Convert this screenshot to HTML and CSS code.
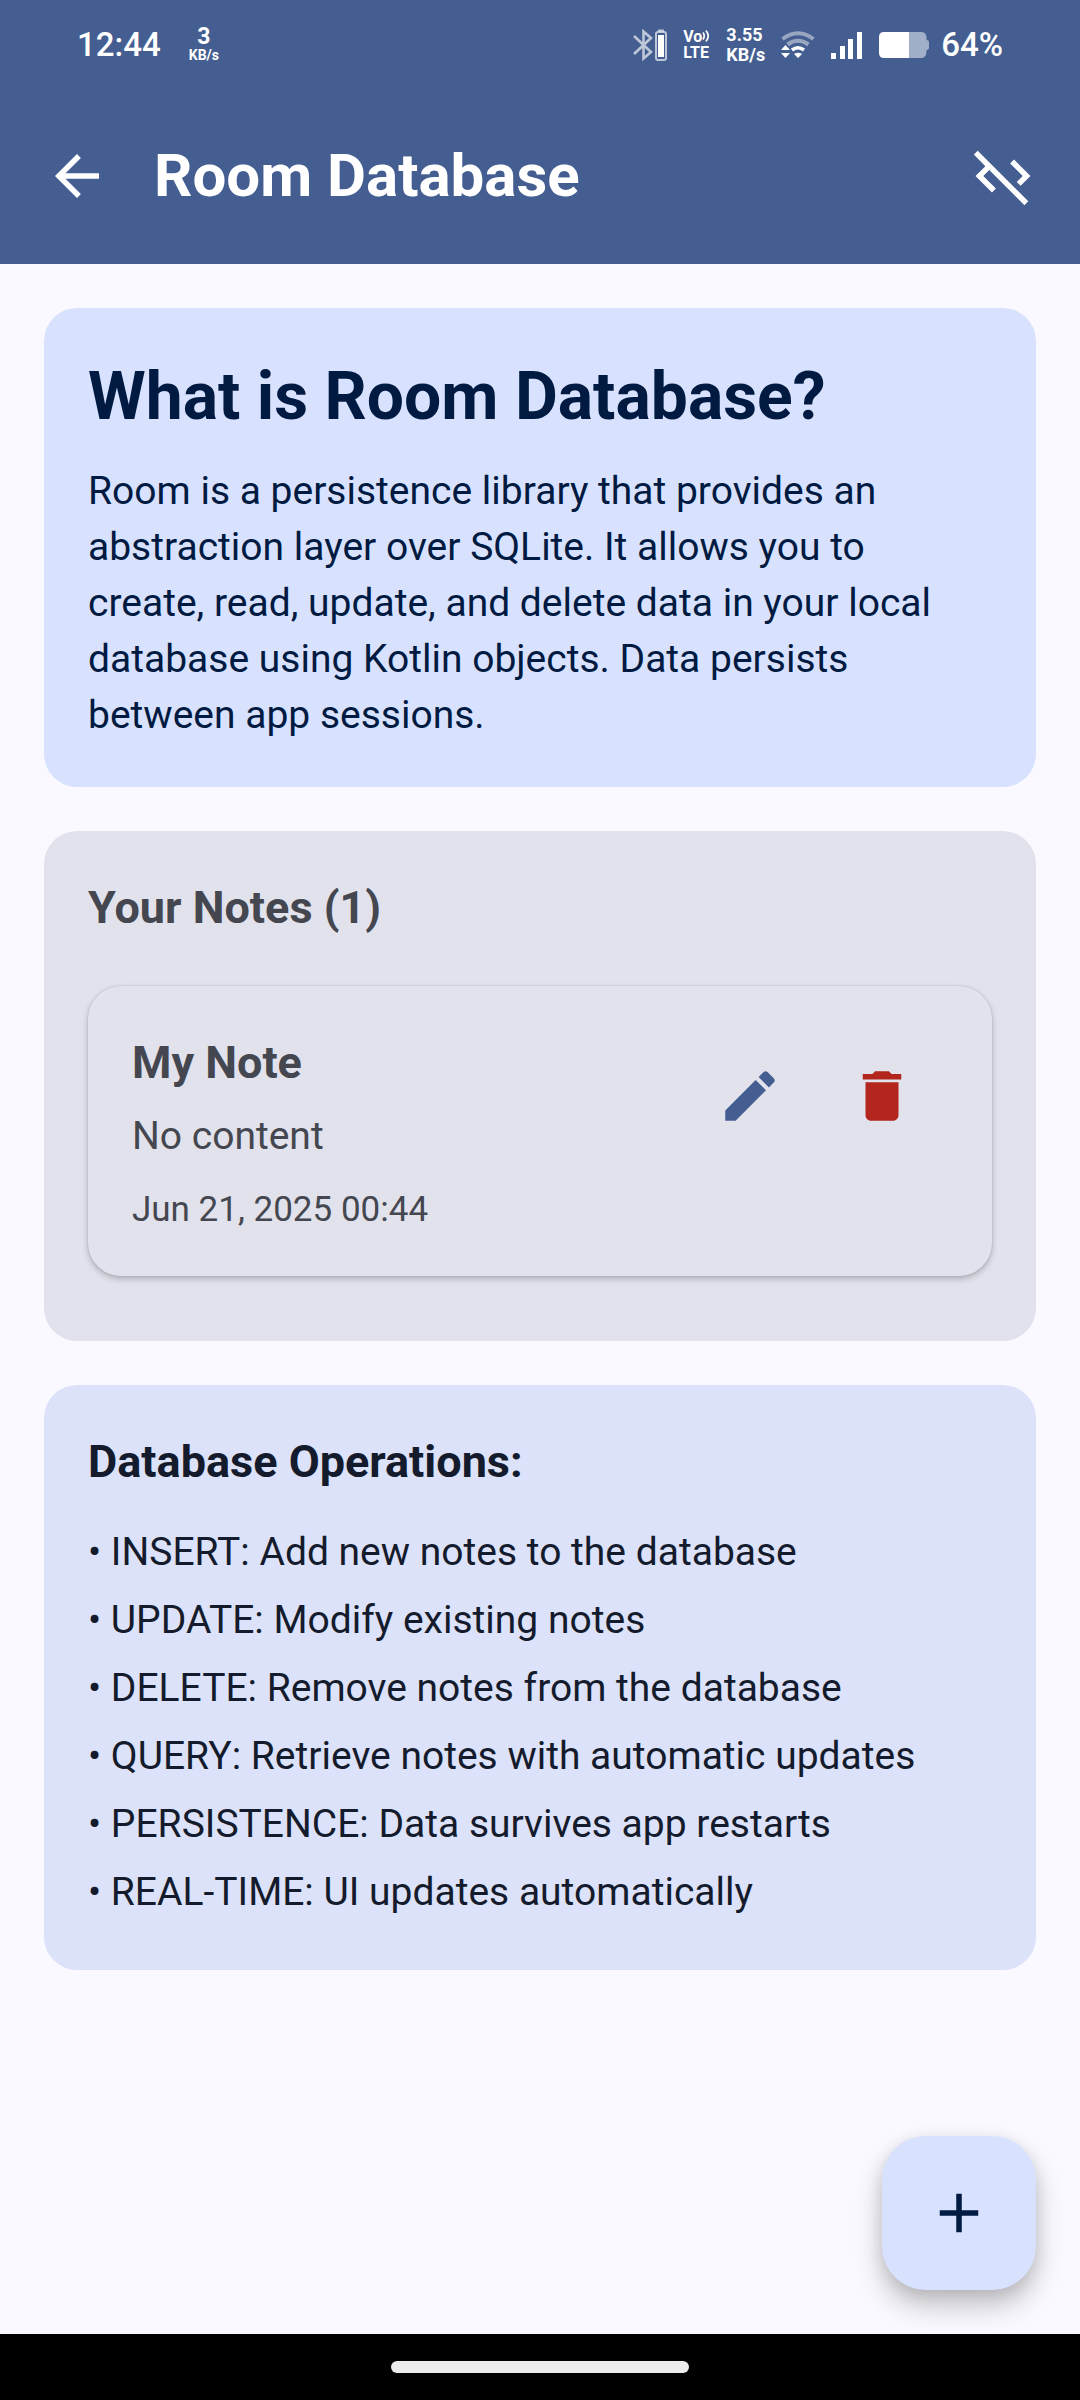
FILE: index.html
```html
<!DOCTYPE html>
<html lang="en">
<head>
  <meta charset="utf-8">
  <meta name="viewport" content="width=device-width, initial-scale=1">
  <title>Room Database</title>
  <link rel="stylesheet" href="styles.css">
</head>
<body>
  <div class="screen">
    <header class="header">
      <div class="status">
        <div class="status-group">
          <span class="status-time">12:44</span>
          <span class="net-speed"><b>3</b><small>KB/s</small></span>
        </div>
        <div class="status-group status-right">
          <svg class="status-icon" width="34" height="32" viewBox="0 0 34 32" aria-label="Bluetooth">
            <g fill="none" stroke="#fff" stroke-opacity=".65">
              <path stroke-width="2.6" d="M1 7 18 23 10.5 29.500V2.500L18 9 1 25"/>
              <rect x="23" y="3" width="10" height="28" rx="2" stroke-width="2"/>
              <path stroke-width="2" d="M25 1.500h6"/>
            </g>
            <path fill="#fff" d="M25 6h6v22h-6z"/>
          </svg>
          <span class="volte"><span class="volte-top">Vo<svg width="8" height="14" viewBox="0 0 8 14" aria-hidden="true"><path fill="none" stroke="#fff" stroke-width="1.700" d="M1 3.500q2.500 3.500 0 7M4 1.500q4.500 5.500 0 11"/></svg></span><span>LTE</span></span>
          <span class="rate"><span>3.55</span><span>KB/s</span></span>
          <svg class="status-icon" width="34" height="28" viewBox="0 0 34 28" aria-label="Wi-Fi">
            <g fill="none" stroke="#fff" stroke-width="4">
              <path stroke-opacity=".45" d="M1.500 8q15.500-11.500 31 0M6.500 13.500q10.500-7.500 21 0"/>
              <path d="M11 19q6-4.500 12 0" stroke-width="3.600"/>
            </g>
            <path fill="#fff" d="M17 27l-4-4q4-2.600 8 0zM0 19l4.500-5 4.500 5zM0 22h9l-4.500 5z"/>
          </svg>
          <svg class="status-icon" width="32" height="28" viewBox="0 0 32 28" aria-label="Mobile signal">
            <path fill="#fff" d="M0 22h5v6H0zM9 15h5v13H9zM17 8h5v20h-5zM26 1h5v27h-5z"/>
          </svg>
          <span class="power">
            <svg class="status-icon" width="50" height="26" viewBox="0 0 50 26" aria-label="Battery">
              <path fill="#fff" fill-opacity=".5" d="M30 0h12q5 0 5.500 5v3q2.500 0 2.500 2v6q0 2-2.500 2v2q-.5 6-5.500 6H30z"/>
              <path fill="#fff" d="M30 0v26H5q-5 0-5-5V5q0-5 5-5z"/>
            </svg>
            <span class="status-percent">64%</span>
          </span>
        </div>
      </div>
      <div class="app-bar">
        <button class="icon-button" type="button" aria-label="Back">
          <svg viewBox="0 0 24 24"><path d="M20 11H7.830l5.590-5.590L12 4l-8 8 8 8 1.410-1.410L7.830 13H20z"/></svg>
        </button>
        <h1 class="app-title">Room Database</h1>
        <button class="icon-button" type="button" aria-label="Hide code">
          <svg viewBox="0 0 24 24"><path d="M19.170 12l-4.580-4.590L16 6l6 6-3.590 3.590L17 14.170zM1.390 4.220l4.190 4.190L2 12l6 6 1.410-1.410L4.830 12 7 9.830l12.780 12.780 1.410-1.410L2.810 2.810z"/></svg>
        </button>
      </div>
    </header>

    <main class="content">
      <section class="card intro">
        <h2 class="headline">What is Room Database?</h2>
        <p class="body intro-text">Room is a persistence library that provides an abstraction layer over SQLite. It allows you to create, read, update, and delete data in your local database using Kotlin objects. Data persists between app sessions.</p>
      </section>

      <section class="card notes">
        <h2 class="title">Your Notes (1)</h2>
        <article class="note">
          <div class="note-text">
            <h3 class="title">My Note</h3>
            <p class="body">No content</p>
            <time class="date" datetime="2025-06-21T00:44">Jun 21, 2025 00:44</time>
          </div>
          <button class="icon-button edit" type="button" aria-label="Edit note">
            <svg viewBox="0 0 24 24"><path d="M3 17.250V21h3.750L17.810 9.940l-3.750-3.750zM20.710 7.040c.39-.39.39-1.020 0-1.410l-2.340-2.340c-.39-.39-1.020-.39-1.410 0l-1.830 1.830 3.750 3.750z"/></svg>
          </button>
          <button class="icon-button delete" type="button" aria-label="Delete note">
            <svg viewBox="0 0 24 24"><path d="M6 19c0 1.100.9 2 2 2h8c1.100 0 2-.9 2-2V7H6zM19 4h-3.500l-1-1h-5l-1 1H5v2h14z"/></svg>
          </button>
        </article>
      </section>

      <section class="card operations">
        <h2 class="title">Database Operations:</h2>
        <ul class="operation-list body">
          <li>• INSERT: Add new notes to the database</li>
          <li>• UPDATE: Modify existing notes</li>
          <li>• DELETE: Remove notes from the database</li>
          <li>• QUERY: Retrieve notes with automatic updates</li>
          <li>• PERSISTENCE: Data survives app restarts</li>
          <li>• REAL-TIME: UI updates automatically</li>
        </ul>
      </section>

      <button class="fab" type="button" aria-label="Add note">
        <svg viewBox="0 0 24 24"><path d="M19 13h-6v6h-2v-6H5v-2h6V5h2v6h6z"/></svg>
      </button>
    </main>

    <footer class="nav-bar"><span class="nav-handle"></span></footer>
  </div>
</body>
</html>
```
FILE: styles.css
```css
* {
  box-sizing: border-box;
}

body,
h1,
h2,
h3,
p,
ul {
  margin: 0;
  padding: 0;
}

body {
  background: #faf9ff;
  font-family: Roboto, "Noto Sans", sans-serif;
}

button {
  border: 0;
  padding: 0;
  background: none;
  font: inherit;
  cursor: pointer;
}

svg {
  display: block;
}

.screen {
  display: flex;
  flex-direction: column;
  min-height: 100vh;
}

/* Header */
.header {
  background: #445e91;
  color: #fff;
}

.status {
  display: flex;
  justify-content: space-between;
  align-items: center;
  height: 88px;
  padding: 2px 77px 0;
}

.status-group {
  display: flex;
  align-items: center;
  gap: 28px;
}

.status-right {
  gap: 16px;
}

.status-icon {
  flex: none;
}

.power {
  display: flex;
  align-items: center;
  gap: 12px;
}

.status-time,
.status-percent {
  font-size: 33px;
  font-weight: 500;
  line-height: 40px;
}

.net-speed {
  display: flex;
  flex-direction: column;
  align-items: center;
}

.net-speed b {
  font-size: 23px;
  line-height: 20px;
}

.net-speed small {
  font-size: 14px;
  font-weight: 700;
  line-height: 16px;
}

.volte {
  display: flex;
  flex-direction: column;
  font-size: 16px;
  font-weight: 700;
  line-height: 16px;
}

.volte-top {
  display: flex;
}

.rate {
  display: flex;
  flex-direction: column;
  font-size: 18px;
  font-weight: 700;
  line-height: 20px;
}

.app-bar {
  display: flex;
  align-items: center;
  height: 176px;
  padding: 0 11px;
}

.app-title {
  flex: 1;
  padding-left: 11px;
  font-size: 60px;
  font-weight: 700;
  line-height: 76px;
}

.icon-button {
  display: grid;
  place-items: center;
  flex: none;
  width: 132px;
  height: 132px;
  color: inherit;
}

.icon-button svg,
.fab svg {
  width: 66px;
  height: 66px;
  fill: currentColor;
}

/* Content */
.content {
  position: relative;
  display: flex;
  flex: 1;
  flex-direction: column;
  gap: 44px;
  padding: 44px;
}

.card {
  padding: 44px;
  border-radius: 33px;
}

.headline {
  margin-bottom: 22px;
  font-size: 66px;
  font-weight: 700;
  line-height: 89px;
}

.title {
  font-size: 45px;
  font-weight: 700;
  line-height: 66px;
}

.body {
  font-size: 39px;
  line-height: 56px;
}

.intro {
  background: #d8e2ff;
  color: #001a41;
}

.intro-text {
  padding-right: 22px;
}

.notes {
  padding-bottom: 65px;
  background: #e1e2ec;
  color: #44474f;
}

.note {
  display: flex;
  align-items: flex-start;
  margin-top: 45px;
  padding: 44px;
  border-radius: 33px;
  background: #e1e2ec;
  box-shadow: 0 3px 6px rgba(0, 0, 0, 0.22), 0 0 2px rgba(0, 0, 0, 0.16);
}

.note-text {
  display: flex;
  flex: 1;
  flex-direction: column;
  gap: 12px;
}

.date {
  margin-top: 12px;
  font-size: 35px;
  line-height: 44px;
}

.edit {
  color: #445e91;
}

.delete {
  color: #b3261e;
}

.operations {
  background: #dce2f9;
  color: #141b2c;
}

.operation-list {
  margin-top: 23px;
  list-style: none;
}

.operation-list li {
  padding: 6px 0;
}

.fab {
  position: absolute;
  right: 44px;
  bottom: 44px;
  display: grid;
  place-items: center;
  width: 154px;
  height: 154px;
  border-radius: 44px;
  background: #d8e2ff;
  color: #001a41;
  box-shadow: 0 16px 28px rgba(0, 0, 0, 0.22), 0 4px 16px rgba(0, 0, 0, 0.1);
}

/* System navigation */
.nav-bar {
  display: grid;
  place-items: center;
  position: relative;
  height: 66px;
  background: #000;
}

.nav-handle {
  width: 298px;
  height: 12px;
  border-radius: 6px;
  background: #ececec;
}
```
